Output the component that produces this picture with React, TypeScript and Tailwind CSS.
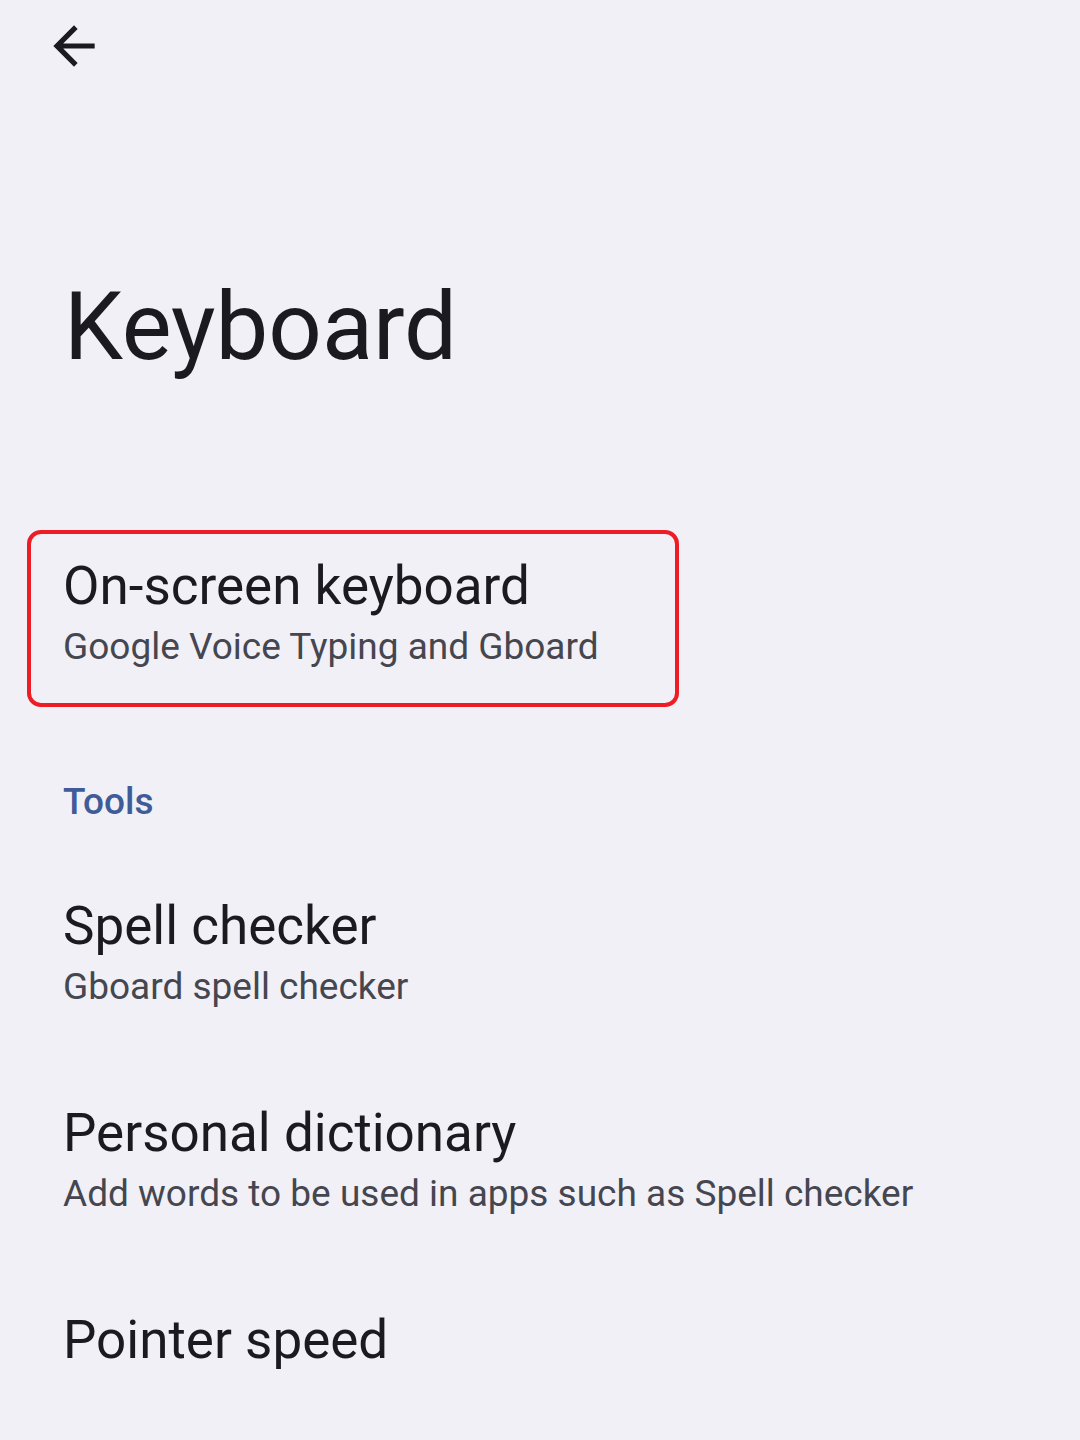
const font = { fontFamily: 'Roboto, "Noto Sans", sans-serif' };

function BackArrow() {
  return (
    <svg viewBox="0 0 24 24" className="w-[62px] h-[62px]" fill="#1b1b1f">
      <path d="M20 11H7.83l5.59-5.59L12 4l-8 8 8 8 1.41-1.41L7.83 13H20v-2z" />
    </svg>
  );
}

function Item({ title, summary }: { title: string; summary?: string }) {
  return (
    <div className="pl-[63px] flex flex-col">
      <div className="text-[53px] leading-[62px] text-[#1b1b1f]">{title}</div>
      {summary && <div className="text-[37px] leading-[60px] text-[#45464f]">{summary}</div>}
    </div>
  );
}

export default function App() {
  return (
    <div className="w-[1080px] h-[1440px] bg-[#f1f0f6] overflow-hidden" style={font}>
      <div className="pl-[43px] pt-[15px]">
        <BackArrow />
      </div>

      <h1 className="mt-[195px] pl-[64px] text-[94px] leading-[110px] text-[#1b1b1f]">Keyboard</h1>

      <div className="mt-[148px] ml-[27px] w-[652px] h-[177px] border-[4px] border-[#ee1c25] rounded-[14px] flex flex-col pt-[21px] pl-[32px]">
        <div className="text-[53px] leading-[62px] text-[#1b1b1f]">On-screen keyboard</div>
        <div className="text-[37px] leading-[60px] text-[#45464f]">Google Voice Typing and Gboard</div>
      </div>

      <div className="mt-[72px] pl-[63px] text-[37px] leading-[46px] font-medium text-[#3f5b98]">Tools</div>

      <div className="mt-[70px] flex flex-col gap-[85px]">
        <Item title="Spell checker" summary="Gboard spell checker" />
        <Item title="Personal dictionary" summary="Add words to be used in apps such as Spell checker" />
        <Item title="Pointer speed" />
      </div>
    </div>
  );
}
